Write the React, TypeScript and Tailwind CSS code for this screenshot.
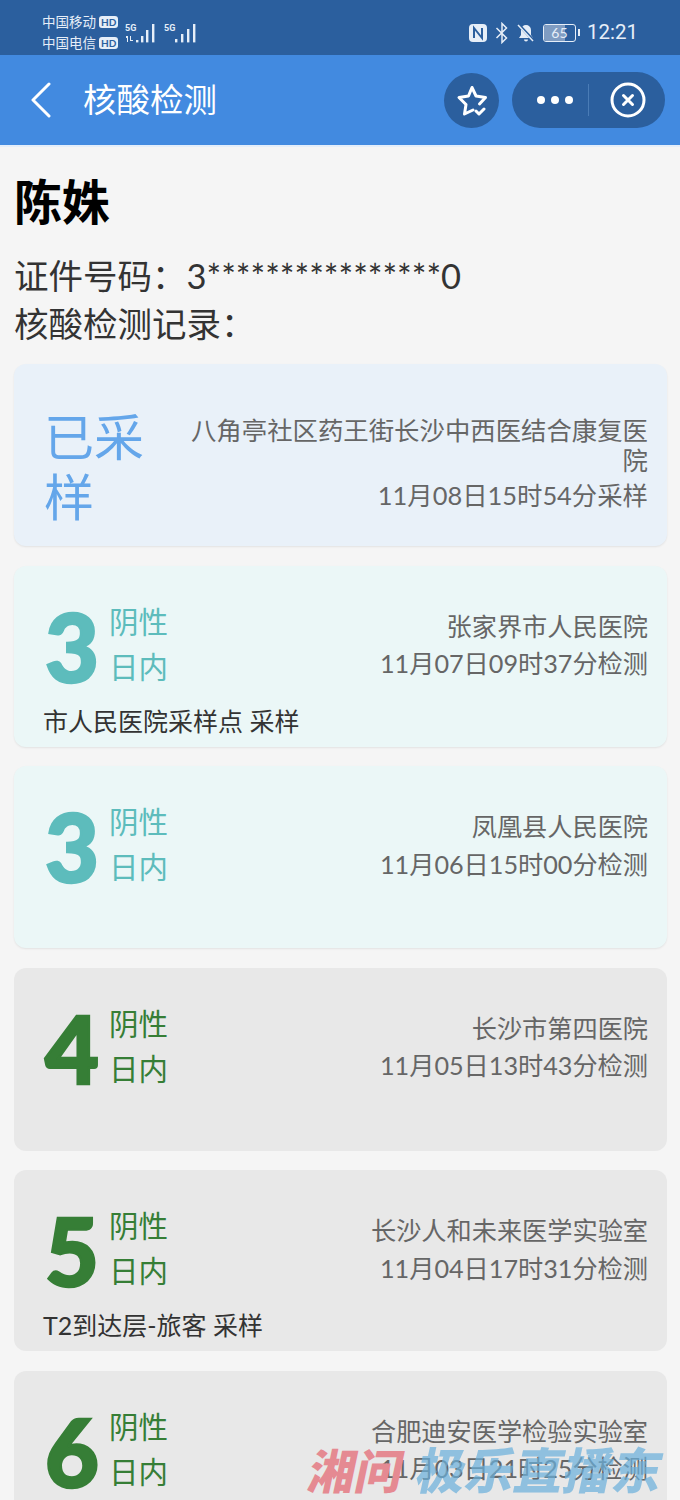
import React from "react";

const cjk = "font-['Lato','Noto_Sans_CJK_SC',sans-serif]";

type R = { n: string; place: string; time: string; note?: string; tone: "teal" | "green"; h: string };

const rows: R[] = [
  { n: "3", place: "张家界市人民医院", time: "11月07日09时37分检测", note: "市人民医院采样点 采样", tone: "teal", h: "h-[181px]" },
  { n: "3", place: "凤凰县人民医院", time: "11月06日15时00分检测", tone: "teal", h: "h-[182px]" },
  { n: "4", place: "长沙市第四医院", time: "11月05日13时43分检测", tone: "green", h: "h-[183px]" },
  { n: "5", place: "长沙人和未来医学实验室", time: "11月04日17时31分检测", note: "T2到达层-旅客 采样", tone: "green", h: "h-[181px]" },
  { n: "6", place: "合肥迪安医学检验实验室", time: "11月03日21时25分检测", tone: "green", h: "h-[181px]" },
];

function Card({ r }: { r: R }) {
  const teal = r.tone === "teal";
  return (
    <div className={`${r.h} shrink-0 rounded-xl pl-[30px] pr-[19px] pt-[32px] flex flex-col ${teal ? "bg-[#ebf7f7] shadow-[0_1px_2px_rgba(0,0,0,0.08)]" : "bg-[#e8e8e8]"}`}>
      <div className="flex justify-between items-start h-[106px]">
        <div className={`flex ${teal ? "text-[#5dbcbc]" : "text-[#367e36]"}`}>
          <div className="w-[65px] pl-[1px] text-[93px] leading-[97px] font-black [-webkit-text-stroke:2.5px_currentColor]">{r.n}</div>
          <div className="text-[29.500px] leading-[45px] font-['Noto_Sans_CJK_SC',sans-serif]">
            <div>阴性</div>
            <div>日内</div>
          </div>
        </div>
        <div className="text-right text-[#666666] text-[25.200px] leading-[37.500px] pt-[10px]">
          <div>{r.place}</div>
          <div>{r.time}</div>
        </div>
      </div>
      {r.note && <div className="text-[#333333] text-[25px] leading-[34px] -ml-[1px]">{r.note}</div>}
    </div>
  );
}

export default function App() {
  return (
    <div className={`relative w-[680px] h-[1500px] overflow-hidden bg-[#f5f5f5] ${cjk}`}>
      <div className="h-[55px] bg-[#2b5f9e] flex items-center justify-between pl-[42px] pr-[42px] pt-[10px] text-white">
        <div className="flex items-center gap-[7px]">
          <div className="text-[13.500px] leading-[21px] text-[#e6eef8]">
            <div className="flex items-center gap-[3px]">中国移动<span className="bg-[#e6eef8] text-[#2b5f9e] rounded-[3px] text-[10px] leading-[12px] font-bold px-[2px]">HD</span></div>
            <div className="flex items-center gap-[3px]">中国电信<span className="bg-[#e6eef8] text-[#2b5f9e] rounded-[3px] text-[10px] leading-[12px] font-bold px-[2px]">HD</span></div>
          </div>
          <svg width="72" height="24" viewBox="0 0 72 24" fill="#e6eef8">
            <text x="0" y="10" fontSize="9" fontWeight="700" fontFamily="Roboto">5G</text>
            <text x="39" y="10" fontSize="9" fontWeight="700" fontFamily="Roboto">5G</text>
            <path d="M1 15h2v6H2v-4H1zM5 15h1v4h2v1H5z" />
            <rect x="11" y="19" width="2.400" height="2.400" /><rect x="16" y="15" width="2.400" height="6.400" /><rect x="21" y="9" width="2.400" height="12.400" /><rect x="27" y="3" width="2.400" height="18.400" />
            <rect x="50" y="18" width="2.400" height="3.400" /><rect x="56" y="13" width="2.400" height="8.400" /><rect x="62" y="8" width="2.400" height="13.400" /><rect x="68" y="3" width="2.400" height="18.400" />
          </svg>
        </div>
        <div className="flex items-center gap-[7px]">
          <svg width="20" height="20" viewBox="0 0 20 20"><rect x="1" y="1" width="18" height="18" rx="4" fill="#e6eef8" /><path d="M6 15V5l8 10V5" stroke="#2b5f9e" strokeWidth="2" fill="none" /></svg>
          <svg width="14" height="22" viewBox="0 0 14 22" fill="none" stroke="#e6eef8" strokeWidth="1.500"><path d="M1.500 6l10 10-4.500 4.500V1.500L11.500 6l-10 10" /></svg>
          <svg width="20" height="20" viewBox="0 0 20 20" fill="#e6eef8"><path d="M10 2a5 5 0 0 0-5 5v5l-2 3h14l-2-3V7a5 5 0 0 0-5-5zM8 16.500h4a2 2 0 0 1-4 0z" /><path d="M2 1l16 17" stroke="#2b5f9e" strokeWidth="3" /><path d="M2 2l15 16" stroke="#e6eef8" strokeWidth="1.500" /></svg>
          <div className="flex items-center">
            <div className="relative w-[33px] h-[18px] rounded-[3px] border border-[#e6eef8] overflow-hidden flex items-center justify-center text-[14px] leading-none text-[#e6eef8]">
              <div className="absolute left-0 top-0 bottom-0 w-[21px] bg-[#7f9cc2]" />
              <span className="relative">65</span>
            </div>
            <div className="w-[2px] h-[7px] bg-[#e6eef8] ml-[2px]" />
          </div>
          <div className="text-[20.500px] text-[#e6eef8] font-['Roboto',sans-serif]">12:21</div>
        </div>
      </div>
      <div className="h-[90px] bg-[#428ae0] flex items-center justify-between pl-[30px] pr-[15px]">
        <div className="flex items-center gap-[31px]">
          <svg width="22" height="36" viewBox="0 0 22 36" fill="none" stroke="white" strokeWidth="3" strokeLinecap="round" strokeLinejoin="round"><path d="M19 2L3 18l16 16" /></svg>
          <div className="text-white text-[33.500px] leading-none -mt-[4px] font-['Noto_Sans_CJK_SC',sans-serif]">核酸检测</div>
        </div>
        <div className="flex items-center gap-[13px]">
          <div className="w-[55px] h-[55px] rounded-full bg-[#2b5f9e] flex items-center justify-center">
            <svg width="32" height="32" viewBox="0 0 32 32" fill="none" stroke="white" strokeWidth="3" strokeLinejoin="round" strokeLinecap="round"><path d="M17 26l-8.500 4 1.500-9.500L3 13.500l9.500-1.500L16 3.500l4 8.500 9.500 1.500-6 6.500" /><path d="M20 27l3 3 5-5" /></svg>
          </div>
          <div className="w-[153px] h-[56px] rounded-full bg-[#2b5f9e] flex items-center pl-[25px]">
            <div className="flex gap-[6px]">
              <div className="w-[8px] h-[8px] rounded-full bg-white" />
              <div className="w-[8px] h-[8px] rounded-full bg-white" />
              <div className="w-[8px] h-[8px] rounded-full bg-white" />
            </div>
            <div className="w-px h-[32px] bg-[#4a7cb6] ml-[15px]" />
            <svg className="ml-[21px]" width="36" height="36" viewBox="0 0 36 36" fill="none" stroke="white" strokeWidth="3" strokeLinecap="round"><circle cx="18" cy="18" r="16" /><path d="M13.500 13.500l9 9M22.500 13.500l-9 9" /></svg>
          </div>
        </div>
      </div>
      <div className="h-[2px] bg-[#e4eefa]" />
      <div className="px-[14px]">
        <div className="text-[48px] leading-[56px] font-bold text-black mt-[24px] font-['Noto_Sans_CJK_SC',sans-serif]">陈姝</div>
        <div className="text-[#333333] text-[34.500px] leading-[48px] mt-[25px]">
          <div>证件号码：3****************0</div>
          <div>核酸检测记录：</div>
        </div>
        <div className="mt-[16px] flex flex-col gap-[19.500px] w-[653px]">
          <div className="h-[182px] rounded-xl bg-[#e9f1f9] shadow-[0_1px_2px_rgba(0,0,0,0.08)] pl-[30px] pr-[19px] pt-[40px] flex justify-between">
            <div className="w-[110px] text-[50px] leading-[60px] text-[#64a6ea] font-['Noto_Sans_CJK_SC',sans-serif]">已采样</div>
            <div className="text-right text-[#666666] text-[25.400px] leading-[30px] w-[470px] pt-[11px]">
              <div>八角亭社区药王街长沙中西医结合康复医院</div>
              <div className="mt-[5px]">11月08日15时54分采样</div>
            </div>
          </div>
          {rows.map((r, i) => <Card key={i} r={r} />)}
        </div>
      </div>
      <div className="absolute left-[310px] top-[1444px] flex items-baseline font-black leading-[48px] -skew-x-12 pointer-events-none whitespace-nowrap font-['Noto_Sans_CJK_SC',sans-serif]">
        <span className="text-[#e58a92] text-[47px]">湘问</span>
        <span className="text-[#6ab0dc] text-[49px] opacity-70 ml-[14px]">极乐直播东</span>
      </div>
    </div>
  );
}
